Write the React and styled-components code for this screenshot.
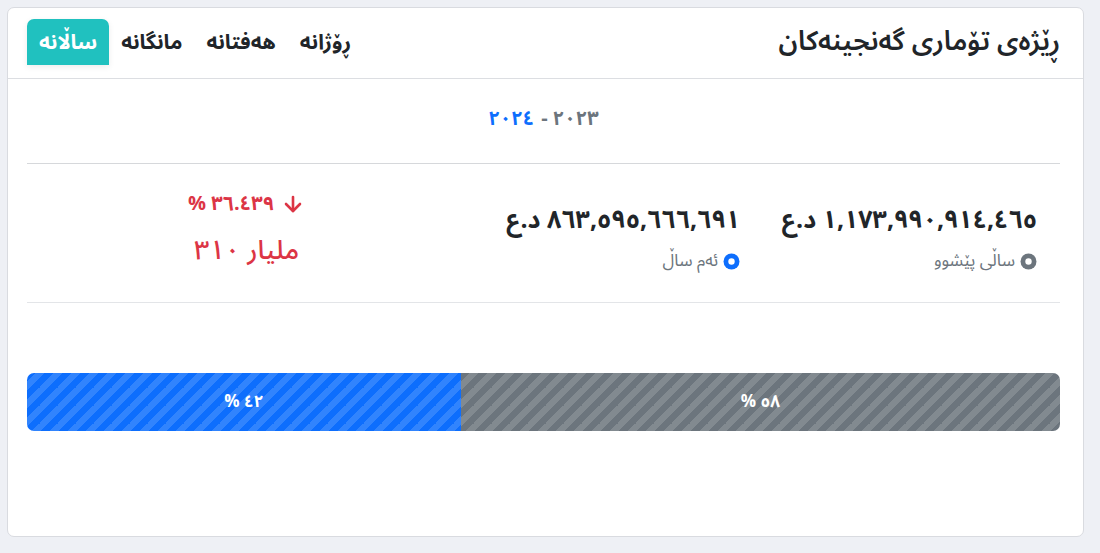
import React from "react";
import styled, { createGlobalStyle } from "styled-components";
import { ArrowDown } from "lucide-react";

const GlobalStyle = createGlobalStyle`
  body {
    margin: 0;
    background: #eef0f5;
    font-family: "Noto Sans Arabic", "DejaVu Sans", "Noto Sans", sans-serif;
  }
`;

const Page = styled.div`
  padding: 7px;
`;

const Card = styled.div`
  direction: rtl;
  width: 1077px;
  height: 530px;
  box-sizing: border-box;
  background: #fff;
  border: 1px solid #d9dbe0;
  border-radius: 7px;
  display: flex;
  flex-direction: column;
`;

const Header = styled.div`
  height: 71px;
  box-sizing: border-box;
  padding: 0 23px 0 19px;
  border-bottom: 1px solid #dcdee2;
  display: flex;
  align-items: center;
  justify-content: space-between;
`;

const Title = styled.h2`
  margin: 0 0 3px;
  font-size: 27px;
  font-weight: 600;
  color: #212529;
`;

const Tabs = styled.div`
  display: flex;
  align-self: flex-end;
  margin-bottom: 13px;
`;

const Tab = styled.button`
  border: none;
  background: ${(p) => (p.$active ? "#20c1bf" : "transparent")};
  color: ${(p) => (p.$active ? "#fff" : "#212529")};
  border-radius: 7px 7px 0 0;
  height: 46px;
  padding: 0 12px;
  font-family: inherit;
  font-size: 21px;
  font-weight: 700;
  box-shadow: ${(p) => (p.$active ? "0 2px 6px rgba(0,0,0,0.08)" : "none")};
`;

const Body = styled.div`
  padding: 0 23px 0 19px;
  display: flex;
  flex-direction: column;
`;

const Range = styled.div`
  height: 85px;
  box-sizing: border-box;
  padding-bottom: 5px;
  display: flex;
  align-items: center;
  justify-content: center;
  font-size: 20px;
  font-weight: 700;
  color: #6c757d;
  border-bottom: 1px solid #d6d8db;
`;

const RangeEnd = styled.span`
  color: #0d6efd;
  margin-right: 7px;
`;

const Stats = styled.div`
  display: grid;
  grid-template-columns: 297px 297px 1fr;
  height: 138px;
  align-items: center;
  border-bottom: 1px solid #e3e5e8;
`;

const Stat = styled.div`
  padding-right: 23px;
  padding-top: 7px;
  display: flex;
  flex-direction: column;
  align-items: flex-start;
`;

const Amount = styled.div`
  font-size: 25px;
  font-weight: 700;
  color: #212529;
  margin-bottom: -3px;
`;

const Label = styled.div`
  display: flex;
  align-items: center;
  gap: 5px;
  font-size: 17px;
  color: #6c757d;
`;

const Diff = styled.div`
  display: flex;
  flex-direction: column;
  align-items: center;
  color: #dc3545;
  margin-top: -5px;
`;

const Percent = styled.div`
  display: flex;
  align-items: center;
  gap: 7px;
  font-size: 20px;
  font-weight: 700;
`;

const Loss = styled.div`
  margin-top: -3px;
  font-size: 27px;
  font-weight: 500;
`;

const Progress = styled.div`
  margin-top: 70px;
  height: 58px;
  display: flex;
  border-radius: 7px;
  overflow: hidden;
`;

const Bar = styled.div`
  width: ${(p) => p.$value}%;
  background-color: ${(p) => p.$color};
  background-image: linear-gradient(
    -45deg,
    rgba(255, 255, 255, 0.15) 25%,
    transparent 25%,
    transparent 50%,
    rgba(255, 255, 255, 0.15) 50%,
    rgba(255, 255, 255, 0.15) 75%,
    transparent 75%,
    transparent
  );
  background-size: 18px 18px;
  display: flex;
  align-items: center;
  justify-content: center;
  color: #fff;
  font-size: 17px;
  font-weight: 700;
`;

const Dot = ({ color }) => (
  <svg width="17" height="17" viewBox="0 0 16 16">
    <circle cx="8" cy="8" r="7.5" fill={color} />
    <circle cx="8" cy="8" r="3" fill="#fff" />
  </svg>
);

export default function App() {
  return (
    <Page>
      <GlobalStyle />
      <Card>
        <Header>
          <Title>ڕێژەی تۆماری گەنجینەکان</Title>
          <Tabs>
            <Tab>ڕۆژانە</Tab>
            <Tab>هەفتانە</Tab>
            <Tab>مانگانە</Tab>
            <Tab $active>ساڵانە</Tab>
          </Tabs>
        </Header>
        <Body>
          <Range>
            ٢٠٢٣ -<RangeEnd>٢٠٢٤</RangeEnd>
          </Range>
          <Stats>
            <Stat>
              <Amount>١,١٧٣,٩٩٠,٩١٤,٤٦٥ د.ع</Amount>
              <Label>
                <Dot color="#6c757d" />
                ساڵی پێشوو
              </Label>
            </Stat>
            <Stat>
              <Amount>٨٦٣,٥٩٥,٦٦٦,٦٩١ د.ع</Amount>
              <Label>
                <Dot color="#0d6efd" />
                ئەم ساڵ
              </Label>
            </Stat>
            <Diff>
              <Percent>
                <ArrowDown size={24} strokeWidth={2.6} />
                ٣٦.٤٣٩ %
              </Percent>
              <Loss>مليار ٣١٠</Loss>
            </Diff>
          </Stats>
          <Progress>
            <Bar $value={58} $color="#6c757d">٥٨ %</Bar>
            <Bar $value={42} $color="#0d6efd">٤٢ %</Bar>
          </Progress>
        </Body>
      </Card>
    </Page>
  );
}
